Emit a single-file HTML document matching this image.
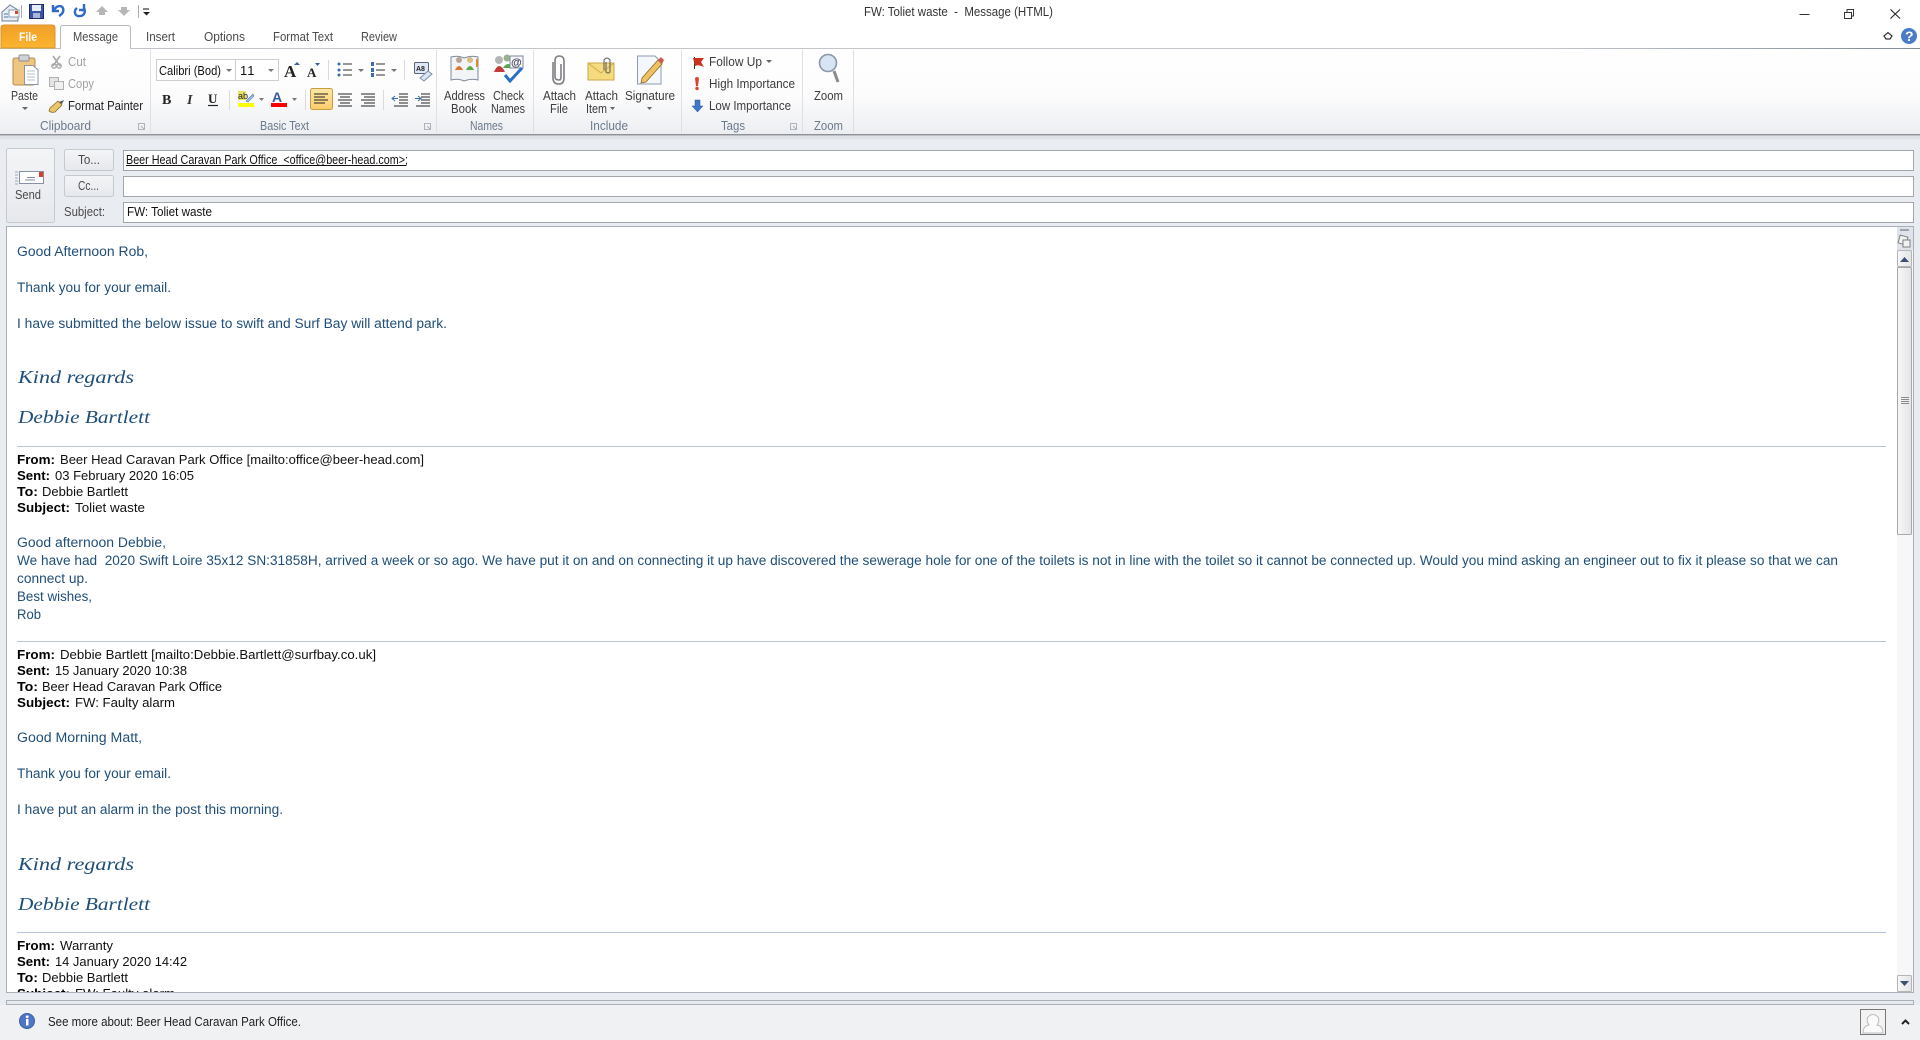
<!DOCTYPE html>
<html><head><meta charset="utf-8"><title>FW: Toliet waste - Message (HTML)</title>
<style>
html,body{margin:0;padding:0;width:1920px;height:1040px;overflow:hidden;background:#e9ecf1}
svg{display:block;position:absolute;left:0;top:0}
text{font-family:"Liberation Sans",sans-serif;font-size:13px;white-space:pre}
.r{fill:#3c3c3c;font-size:12.5px}
.d{fill:#a0a0a0;font-size:12.5px}
.g{fill:#6b7a8c;font-size:12.5px}
.t{fill:#4a4a4a;font-size:12.5px}
.b{fill:#1f4e79;font-size:13.5px}
.k{fill:#111;font-size:13px}
.h{fill:#000;font-size:13px;font-weight:bold}
.s{fill:#1f4e79;font-family:"Liberation Serif",serif;font-style:italic;font-size:18px}
</style></head><body>
<svg width="1920" height="1040" viewBox="0 0 1920 1040" xmlns="http://www.w3.org/2000/svg">
<defs>
<linearGradient id="rb" x1="0" y1="0" x2="0" y2="1"><stop offset="0" stop-color="#fff"/><stop offset=".55" stop-color="#fcfcfd"/><stop offset="1" stop-color="#eceef1"/></linearGradient>
<linearGradient id="fl" x1="0" y1="0" x2="0" y2="1"><stop offset="0" stop-color="#f0a030"/><stop offset=".5" stop-color="#f7a928"/><stop offset="1" stop-color="#fbb530"/></linearGradient>
<linearGradient id="ln" x1="0" y1="0" x2="1" y2="0"><stop offset="0" stop-color="#c0c4c9"/><stop offset=".8" stop-color="#c4c8cd"/><stop offset="1" stop-color="#7f8c97"/></linearGradient>
<linearGradient id="btn" x1="0" y1="0" x2="0" y2="1"><stop offset="0" stop-color="#f4f5f7"/><stop offset="1" stop-color="#e6e8ec"/></linearGradient>
<linearGradient id="sb" x1="0" y1="0" x2="1" y2="0"><stop offset="0" stop-color="#f7f7f8"/><stop offset="1" stop-color="#e3e4e6"/></linearGradient>
<linearGradient id="al" x1="0" y1="0" x2="0" y2="1"><stop offset="0" stop-color="#fde8a5"/><stop offset="1" stop-color="#fbcd6a"/></linearGradient>
</defs>

<!-- title bar + ribbon -->
<rect x="0" y="0" width="1920" height="48" fill="#fff"/>
<rect x="0" y="49" width="1920" height="85" fill="url(#rb)"/>
<rect x="0" y="48" width="1920" height="1" fill="url(#ln)"/>
<rect x="0" y="134" width="1920" height="1.5" fill="#8e9298"/>
<rect x="0" y="136" width="1920" height="3" fill="#dfe2e7"/>

<!-- QAT -->
<path d="M2 12 L10 5 L18 10 V21 H2Z" fill="#e8edf3" stroke="#6e8097"/><rect x="9" y="10" width="10" height="7" fill="#fff" stroke="#8a99ad"/><rect x="15" y="11" width="3" height="3" fill="#d4452b"/><path d="M4 14h4M4 17h4" stroke="#4d7ab5"/>
<path d="M21.5 5v13" stroke="#a8adb3"/>
<rect x="29.5" y="4.5" width="14" height="14" fill="#3d55a5" stroke="#1f2c66"/><rect x="32" y="5" width="9" height="6" fill="#e8eef8"/><rect x="33" y="13" width="7" height="5" fill="#a9b4d8"/>
<path d="M53 5 V11 H59 M54 10 C57 4 65 5 63 12 C62 14 61 15 59 16" fill="none" stroke="#2d6bc5" stroke-width="2.4"/>
<path d="M84 4 V10 H79 M77 8 C73 11 75 17 80 16 C84 16 86 12 84 8" fill="none" stroke="#2d6bc5" stroke-width="2.4"/>
<path d="M96 12 L102 6 L108 12 H105 V15 H99 V12Z" fill="#b4b6b8"/>
<path d="M118 10 H121 V7 H127 V10 H130 L124 16Z" fill="#b4b6b8"/>
<path d="M138.5 5v13" stroke="#a8adb3"/>
<path d="M143 9h6" stroke="#333" stroke-width="1.2"/><path d="M143 12h7l-3.5 3.5z" fill="#222"/>
<text x="864" y="16" class="k" font-size="13" fill="#222" textLength="189" lengthAdjust="spacingAndGlyphs" style="fill:#333">FW: Toliet waste  -  Message (HTML)</text>

<!-- window controls -->
<path d="M1799.5 14.5h10" stroke="#333" stroke-width="1"/>
<rect x="1844.5" y="12.5" width="7" height="6" fill="none" stroke="#333"/><path d="M1847 12.5 V9.5 H1853.5 V16 H1851.5" fill="none" stroke="#333"/>
<path d="M1890.5 9.5 L1900 18.5 M1900 9.5 L1890.5 18.5" stroke="#222" stroke-width="1.1"/>
<path d="M1884 36 L1888 32.500 L1892 36 L1890 39 H1886Z" fill="none" stroke="#333" stroke-width="1.2"/>
<circle cx="1909" cy="36" r="8" fill="#4a7cc9"/><text x="1905" y="41" style="fill:#fff;font-weight:bold;font-size:14px">?</text>

<!-- tabs -->
<path d="M1 48 V28 Q1 25 4 25 H52 Q55 25 55 28 V48Z" fill="url(#fl)" stroke="#d8912a"/>
<text x="19" y="41" style="fill:#fff;font-weight:bold;font-size:12px" textLength="18" lengthAdjust="spacingAndGlyphs">File</text>
<path d="M60.500 49 V28 Q60.500 25.500 63 25.500 H128 Q130.500 25.500 130.500 28 V49" fill="#fff" stroke="#b8bcc2"/><rect x="61" y="47" width="69" height="3" fill="#fff"/>
<text x="73" y="41" class="t" textLength="45" lengthAdjust="spacingAndGlyphs">Message</text>
<text x="146" y="41" class="t" textLength="29" lengthAdjust="spacingAndGlyphs">Insert</text>
<text x="204" y="41" class="t" textLength="41" lengthAdjust="spacingAndGlyphs">Options</text>
<text x="273" y="41" class="t" textLength="60" lengthAdjust="spacingAndGlyphs">Format Text</text>
<text x="361" y="41" class="t" textLength="36" lengthAdjust="spacingAndGlyphs">Review</text>

<!-- group separators -->
<g stroke="#dde0e4"><path d="M150.500 50v83M436.500 50v83M533.500 50v83M681.500 50v83M802.500 50v83M853.500 50v83"/></g>

<!-- Clipboard -->
<rect x="13" y="58" width="22" height="27" rx="2" fill="#eec682" stroke="#b88c4a"/>
<rect x="19" y="55" width="10" height="6" rx="1" fill="#cfd3d8" stroke="#8f8f8f"/>
<path d="M24.500 65.500 H33 L38 70 V84.500 H24.500Z" fill="#fff" stroke="#8a97a8"/><path d="M27 71h8M27 74h8M27 77h8M27 80h8" stroke="#b4bfcc"/>
<text x="11" y="100" class="r" textLength="27" lengthAdjust="spacingAndGlyphs">Paste</text>
<path d="M22 107h6l-3 3z" fill="#666"/>
<path d="M53 56 L60 66 M60 56 L53 66" stroke="#a9a9a9" stroke-width="1.6"/><circle cx="54" cy="66" r="2.200" fill="none" stroke="#a9a9a9" stroke-width="1.400"/><circle cx="59" cy="66" r="2.200" fill="none" stroke="#a9a9a9" stroke-width="1.400"/>
<text x="68" y="66" class="d" textLength="18" lengthAdjust="spacingAndGlyphs">Cut</text>
<rect x="49.500" y="77.500" width="9" height="9" fill="#e4e4e4" stroke="#b0b0b0"/><rect x="54.500" y="81.500" width="9" height="8" fill="#f0f0f0" stroke="#b0b0b0"/>
<text x="68" y="88" class="d" textLength="26" lengthAdjust="spacingAndGlyphs">Copy</text>
<path d="M50 108 L58 101 L62 105 L55 112 Q51 113 49 111Z" fill="#e9c66a" stroke="#8a6a2a" stroke-width=".8"/><path d="M59 102 L64 100 L62 104Z" fill="#555"/>
<text x="68" y="110" class="k" style="font-size:12.5px;fill:#222" textLength="75" lengthAdjust="spacingAndGlyphs">Format Painter</text>
<text x="40" y="130" class="g" textLength="51" lengthAdjust="spacingAndGlyphs">Clipboard</text>
<path d="M138.500 123.500h6v6h-6z M141 126l3 3" fill="none" stroke="#9aa3ad" stroke-width=".8"/>

<!-- Basic Text -->
<rect x="156.500" y="59.500" width="122" height="21" fill="#fff" stroke="#ccced2"/><path d="M235.500 60v20" stroke="#ccced2"/>
<text x="159" y="75" class="k" textLength="62" lengthAdjust="spacingAndGlyphs">Calibri (Bod)</text>
<path d="M226 69h6l-3 3z" fill="#777"/>
<text x="240" y="75" class="k" style="letter-spacing:1px">11</text>
<path d="M268 69h6l-3 3z" fill="#777"/>
<text x="284" y="77" style="font-family:'Liberation Serif',serif;font-weight:bold;font-size:17px;fill:#222">A</text><path d="M294 65l3-3 3 3z" fill="#3a5f9a"/>
<text x="307" y="77" style="font-family:'Liberation Serif',serif;font-weight:bold;font-size:13px;fill:#222">A</text><path d="M315 63h5l-2.500 3z" fill="#3a5f9a"/>
<path d="M328.500 60v20" stroke="#d8dadd"/>
<g fill="#3c6cb0"><circle cx="339" cy="64" r="1.500"/><circle cx="339" cy="70" r="1.500"/><circle cx="339" cy="75" r="1.500"/></g><path d="M343 64h9M343 70h9M343 75h9" stroke="#333"/>
<path d="M358 69h6l-3 3z" fill="#777"/>
<g fill="#3c6cb0"><rect x="371" y="62" width="3" height="4"/><rect x="371" y="68" width="3" height="4"/><rect x="371" y="73" width="3" height="4"/></g><path d="M376 64h9M376 70h9M376 75h9" stroke="#333"/>
<path d="M391 69h6l-3 3z" fill="#777"/>
<path d="M404.500 60v20" stroke="#d8dadd"/>
<rect x="414.500" y="62.500" width="14" height="11" rx="1" fill="#dfe8f5" stroke="#58657a"/><text x="416" y="71" style="font-size:7px;fill:#222;font-weight:bold">A8</text>
<path d="M420 78 L428 71 L432 74 L424 81Z" fill="#dbe6f3" stroke="#7d8fa8"/>
<!-- row 2 -->
<text x="162" y="104" style="font-family:'Liberation Serif',serif;font-weight:bold;font-size:14px;fill:#222">B</text>
<text x="187" y="104" style="font-family:'Liberation Serif',serif;font-style:italic;font-weight:bold;font-size:14px;fill:#333">I</text>
<text x="208" y="103" style="font-family:'Liberation Serif',serif;font-weight:bold;font-size:13px;fill:#222">U</text><path d="M208 105.500h10" stroke="#222" stroke-width="1.200"/>
<path d="M229.500 90v20" stroke="#d8dadd"/>
<rect x="238" y="91" width="8" height="9" fill="#e9e36a"/><text x="238" y="99" style="font-size:9px;fill:#222">ab</text>
<path d="M246 101 L253 94 L254 96 L248 102Z" fill="#9ec0e8" stroke="#5b7da8" stroke-width=".6"/>
<rect x="238" y="103" width="16" height="4" fill="#ffff00"/>
<path d="M259 98h5l-2.500 3z" fill="#777"/>
<text x="272" y="102" style="font-size:14px;font-weight:bold;fill:#3a5a9a">A</text><rect x="271" y="103" width="16" height="4" fill="#f00"/>
<path d="M292 98h5l-2.500 3z" fill="#777"/>
<path d="M305.500 90v20" stroke="#d8dadd"/>
<rect x="310.500" y="88.500" width="22" height="21" rx="2" fill="url(#al)" stroke="#c99b45"/>
<path d="M314 94h14M314 97h11M314 100h14M314 103h11" stroke="#222"/>
<path d="M338 94h14M340 97h10M338 100h14M340 103h10M338 106h14" stroke="#222"/>
<path d="M361 94h14M364 97h11M361 100h14M364 103h11M361 106h14" stroke="#222"/>
<path d="M383.500 90v20" stroke="#d8dadd"/>
<path d="M399 94h9M399 97h9M399 100h9M399 103h9M394 106h14" stroke="#222"/><path d="M398 98.500h-5M395 96l-3 2.500 3 2.500" fill="none" stroke="#3c6cb0"/>
<path d="M421 94h9M421 97h9M421 100h9M421 103h9M416 106h14" stroke="#222"/><path d="M415 98.500h5M418 96l3 2.500-3 2.500" fill="none" stroke="#3c6cb0"/>
<text x="260" y="130" class="g" textLength="49" lengthAdjust="spacingAndGlyphs">Basic Text</text>
<path d="M424.500 123.500h6v6h-6z M427 126l3 3" fill="none" stroke="#9aa3ad" stroke-width=".8"/>

<!-- Names -->
<path d="M451 57 Q458 55 464 58 Q471 55 478 57 V80 Q471 78 464 81 Q458 78 451 80Z" fill="#f2f4f8" stroke="#7d8a9c"/>
<circle cx="459" cy="60" r="3" fill="#b9a58e"/><path d="M455 70 Q459 62 463 70Z" fill="#d97a32"/>
<circle cx="470" cy="60" r="3" fill="#d7c07f"/><path d="M466 70 Q470 62 474 70Z" fill="#5aa84a"/>
<path d="M477 59v8" stroke="#d98b3a" stroke-width="2"/>
<text x="444" y="100" class="r" textLength="41" lengthAdjust="spacingAndGlyphs">Address</text>
<text x="451" y="113" class="r" textLength="26" lengthAdjust="spacingAndGlyphs">Book</text>
<circle cx="499" cy="60" r="4" fill="#b5b5b5"/><path d="M494 72 Q499 60 505 72Z" fill="#c43a3a"/>
<circle cx="507" cy="58" r="3.500" fill="#9ab28c"/><path d="M503 68 Q508 60 513 68Z" fill="#5aa84a"/>
<rect x="510" y="56" width="13" height="12" fill="#f5f7fa" stroke="#7d8a9c"/><text x="511" y="66" style="font-size:11px;font-weight:bold;fill:#445">@</text>
<path d="M505 75 L510 81 L522 68" fill="none" stroke="#2a6fc9" stroke-width="3"/>
<text x="493" y="100" class="r" textLength="31" lengthAdjust="spacingAndGlyphs">Check</text>
<text x="491" y="113" class="r" textLength="34" lengthAdjust="spacingAndGlyphs">Names</text>
<text x="470" y="130" class="g" textLength="33" lengthAdjust="spacingAndGlyphs">Names</text>

<!-- Include -->
<path d="M553 62 V78 Q553 84 559 84 Q564 84 564 78 V61 Q564 56 559 56 Q555 56 555 61 V77 Q555 80 559 80 Q561 80 561 77 V64" fill="none" stroke="#7c7f84" stroke-width="1.600"/>
<text x="543" y="100" class="r" textLength="33" lengthAdjust="spacingAndGlyphs">Attach</text>
<text x="550" y="113" class="r" textLength="18" lengthAdjust="spacingAndGlyphs">File</text>
<rect x="588" y="63" width="26" height="17" fill="#f5da7e" stroke="#c9a94a"/><path d="M588 63 L601 73 L614 63" fill="none" stroke="#d0ae4d"/><path d="M604 70 V60 Q607 56 610 60 V72 Q608 74 606 72 V62" fill="none" stroke="#666" stroke-width="1.100"/>
<text x="585" y="100" class="r" textLength="33" lengthAdjust="spacingAndGlyphs">Attach</text>
<text x="586" y="113" class="r" textLength="21" lengthAdjust="spacingAndGlyphs">Item</text>
<path d="M610 107h5l-2.500 3z" fill="#666"/>
<path d="M637.500 56 H655 L661 62 V84 H637.500Z" fill="#f4f7fb" stroke="#8b9bb0"/>
<path d="M642 78 L658 60 L662 64 L646 82 L641 83Z" fill="#efc262" stroke="#8a6a2a" stroke-width=".8"/><path d="M658 60 L661 57 L664 60 L662 64Z" fill="#cf5a4a"/>
<text x="625" y="100" class="r" textLength="50" lengthAdjust="spacingAndGlyphs">Signature</text>
<path d="M647 107h5l-2.500 3z" fill="#666"/>
<text x="590" y="130" class="g" textLength="38" lengthAdjust="spacingAndGlyphs">Include</text>

<!-- Tags -->
<path d="M694.500 57 V69" stroke="#333"/><path d="M693 58 L704 58 L701 62 L704 67 Q698 64 695 66Z" fill="#c8321f"/>
<text x="709" y="66" class="r" textLength="53" lengthAdjust="spacingAndGlyphs">Follow Up</text>
<path d="M766 60h6l-3 3z" fill="#666"/>
<path d="M695 78 Q697 76 699 78 L698 86 H696Z" fill="#e2412a"/><circle cx="697" cy="88.500" r="1.700" fill="#e2412a"/>
<text x="709" y="88" class="r" textLength="86" lengthAdjust="spacingAndGlyphs">High Importance</text>
<path d="M695 100 H700 V106 H703 L697.500 112 L692 106 H695Z" fill="#3f76c8" stroke="#2a5597" stroke-width=".5"/>
<text x="709" y="110" class="r" textLength="82" lengthAdjust="spacingAndGlyphs">Low Importance</text>
<text x="721" y="130" class="g" textLength="24" lengthAdjust="spacingAndGlyphs">Tags</text>
<path d="M790.500 123.500h6v6h-6z M793 126l3 3" fill="none" stroke="#9aa3ad" stroke-width=".8"/>

<!-- Zoom -->
<circle cx="828" cy="63" r="8.500" fill="#d6e4f3" stroke="#8b97a6" stroke-width="1.600"/>
<path d="M834 71 L838 82" stroke="#8a8a8a" stroke-width="3"/>
<text x="814" y="100" class="r" textLength="29" lengthAdjust="spacingAndGlyphs">Zoom</text>
<text x="814" y="130" class="g" textLength="29" lengthAdjust="spacingAndGlyphs">Zoom</text>

<!-- Form -->
<rect x="6.500" y="148.500" width="48" height="74" rx="2" fill="url(#btn)" stroke="#c6cad0"/>
<rect x="19.500" y="171.500" width="24" height="12" fill="#fff" stroke="#8592a6"/><rect x="39" y="172" width="4" height="5" fill="#d6402a"/>
<path d="M25 180h10M27 177.500h8" stroke="#7f8ea6"/><path d="M15 172h3M15 175h3M15 178h3M15 181h3M15 184h3" stroke="#9aa7b8"/>
<text x="15" y="199" class="t" style="font-size:13px" textLength="26" lengthAdjust="spacingAndGlyphs">Send</text>
<rect x="64.500" y="149.500" width="49" height="21" rx="2" fill="url(#btn)" stroke="#c6cad0"/>
<text x="78" y="164" class="t" textLength="22" lengthAdjust="spacingAndGlyphs">To...</text>
<rect x="64.500" y="175.500" width="49" height="21" rx="2" fill="url(#btn)" stroke="#c6cad0"/>
<text x="78" y="190" class="t" textLength="21" lengthAdjust="spacingAndGlyphs">Cc...</text>
<text x="64" y="216" class="t" textLength="41" lengthAdjust="spacingAndGlyphs">Subject:</text>
<rect x="123.500" y="150.500" width="1790" height="20" fill="#fff" stroke="#a2a5aa"/>
<rect x="123.500" y="176.500" width="1790" height="20" fill="#fff" stroke="#a2a5aa"/>
<rect x="123.500" y="202.500" width="1790" height="20" fill="#fff" stroke="#a2a5aa"/>
<text x="126" y="164" class="k" textLength="282" lengthAdjust="spacingAndGlyphs">Beer Head Caravan Park Office  &lt;office@beer-head.com&gt;;</text>
<path d="M126 165.500h280" stroke="#111"/>
<text x="127" y="216" class="k" textLength="85" lengthAdjust="spacingAndGlyphs">FW: Toliet waste</text>

<!-- Body -->
<rect x="6.500" y="226.500" width="1907" height="766" fill="#fff" stroke="#a9afbb"/>
<rect x="1897" y="227" width="16" height="23" fill="#dfe3ea"/>
<rect x="1900" y="229" width="9" height="2" fill="#9ea3ab"/>
<rect x="1899" y="236" width="8" height="8" fill="#f2f2f2" stroke="#7f7f7f" transform="rotate(15 1903 240)"/><rect x="1903" y="240" width="7" height="7" fill="#f2f2f2" stroke="#7f7f7f"/>
<rect x="1897" y="250" width="16" height="742" fill="#f7f7f8"/>
<rect x="1897.500" y="250.500" width="14" height="16" rx="1" fill="url(#sb)" stroke="#b5b5b5"/>
<path d="M1900 262h9l-4.500-5z" fill="#3d4f73"/>
<rect x="1897.500" y="267.500" width="14" height="267" rx="1" fill="url(#sb)" stroke="#a8a8a8"/>
<path d="M1901 397.500h8M1901 399.500h8M1901 401.500h8M1901 403.500h8" stroke="#8b8b8b"/>
<rect x="1897.500" y="975.500" width="14" height="16" rx="1" fill="url(#sb)" stroke="#b5b5b5"/>
<path d="M1900 981h9l-4.500 5z" fill="#3d4f73"/>

<text x="17" y="256" class="b" textLength="131" lengthAdjust="spacingAndGlyphs">Good Afternoon Rob,</text>
<text x="17" y="292" class="b" textLength="154" lengthAdjust="spacingAndGlyphs">Thank you for your email.</text>
<text x="17" y="328" class="b" textLength="430" lengthAdjust="spacingAndGlyphs">I have submitted the below issue to swift and Surf Bay will attend park.</text>
<text x="18" y="383" class="s" textLength="116" lengthAdjust="spacingAndGlyphs">Kind regards</text>
<text x="18" y="423" class="s" textLength="132" lengthAdjust="spacingAndGlyphs">Debbie Bartlett</text>
<rect x="17" y="446" width="1869" height="1" fill="#b5c4df"/>

<text x="17" y="464" class="h" textLength="38" lengthAdjust="spacingAndGlyphs">From:</text>
<text x="60" y="464" class="k" textLength="364" lengthAdjust="spacingAndGlyphs">Beer Head Caravan Park Office [mailto:office@beer-head.com]</text>
<text x="17" y="480" class="h" textLength="33" lengthAdjust="spacingAndGlyphs">Sent:</text>
<text x="55" y="480" class="k" textLength="139" lengthAdjust="spacingAndGlyphs">03 February 2020 16:05</text>
<text x="17" y="496" class="h" textLength="21" lengthAdjust="spacingAndGlyphs">To:</text>
<text x="42" y="496" class="k" textLength="86" lengthAdjust="spacingAndGlyphs">Debbie Bartlett</text>
<text x="17" y="512" class="h" textLength="53" lengthAdjust="spacingAndGlyphs">Subject:</text>
<text x="75" y="512" class="k" textLength="70" lengthAdjust="spacingAndGlyphs">Toliet waste</text>

<text x="17" y="547" class="b" textLength="149" lengthAdjust="spacingAndGlyphs">Good afternoon Debbie,</text>
<text x="17" y="565" class="b" textLength="1821" lengthAdjust="spacingAndGlyphs">We have had  2020 Swift Loire 35x12 SN:31858H, arrived a week or so ago. We have put it on and on connecting it up have discovered the sewerage hole for one of the toilets is not in line with the toilet so it cannot be connected up. Would you mind asking an engineer out to fix it please so that we can</text>
<text x="17" y="583" class="b" textLength="71" lengthAdjust="spacingAndGlyphs">connect up.</text>
<text x="17" y="601" class="b" textLength="75" lengthAdjust="spacingAndGlyphs">Best wishes,</text>
<text x="17" y="619" class="b" textLength="24" lengthAdjust="spacingAndGlyphs">Rob</text>
<rect x="17" y="641" width="1869" height="1" fill="#b5c4df"/>

<text x="17" y="659" class="h" textLength="38" lengthAdjust="spacingAndGlyphs">From:</text>
<text x="60" y="659" class="k" textLength="316" lengthAdjust="spacingAndGlyphs">Debbie Bartlett [mailto:Debbie.Bartlett@surfbay.co.uk]</text>
<text x="17" y="675" class="h" textLength="33" lengthAdjust="spacingAndGlyphs">Sent:</text>
<text x="55" y="675" class="k" textLength="132" lengthAdjust="spacingAndGlyphs">15 January 2020 10:38</text>
<text x="17" y="691" class="h" textLength="21" lengthAdjust="spacingAndGlyphs">To:</text>
<text x="42" y="691" class="k" textLength="180" lengthAdjust="spacingAndGlyphs">Beer Head Caravan Park Office</text>
<text x="17" y="707" class="h" textLength="53" lengthAdjust="spacingAndGlyphs">Subject:</text>
<text x="75" y="707" class="k" textLength="100" lengthAdjust="spacingAndGlyphs">FW: Faulty alarm</text>

<text x="17" y="742" class="b" textLength="125" lengthAdjust="spacingAndGlyphs">Good Morning Matt,</text>
<text x="17" y="778" class="b" textLength="154" lengthAdjust="spacingAndGlyphs">Thank you for your email.</text>
<text x="17" y="814" class="b" textLength="266" lengthAdjust="spacingAndGlyphs">I have put an alarm in the post this morning.</text>
<text x="18" y="870" class="s" textLength="116" lengthAdjust="spacingAndGlyphs">Kind regards</text>
<text x="18" y="910" class="s" textLength="132" lengthAdjust="spacingAndGlyphs">Debbie Bartlett</text>
<rect x="17" y="932" width="1869" height="1" fill="#b5c4df"/>

<text x="17" y="950" class="h" textLength="38" lengthAdjust="spacingAndGlyphs">From:</text>
<text x="60" y="950" class="k" textLength="53" lengthAdjust="spacingAndGlyphs">Warranty</text>
<text x="17" y="966" class="h" textLength="33" lengthAdjust="spacingAndGlyphs">Sent:</text>
<text x="55" y="966" class="k" textLength="132" lengthAdjust="spacingAndGlyphs">14 January 2020 14:42</text>
<text x="17" y="982" class="h" textLength="21" lengthAdjust="spacingAndGlyphs">To:</text>
<text x="42" y="982" class="k" textLength="86" lengthAdjust="spacingAndGlyphs">Debbie Bartlett</text>
<svg x="7" y="986" width="1889" height="6" viewBox="7 986 1889 6">
<text x="17" y="998" class="h" textLength="53" lengthAdjust="spacingAndGlyphs">Subject:</text>
<text x="75" y="998" class="k" textLength="100" lengthAdjust="spacingAndGlyphs">FW: Faulty alarm</text>
</svg>

<!-- Bottom -->
<rect x="0" y="1005" width="1920" height="35" fill="#eff1f3"/>
<rect x="6.500" y="1000.500" width="1907" height="4" fill="#e6e9ee" stroke="#a9afbb"/>
<circle cx="27" cy="1021" r="7.500" fill="#4d76c4" stroke="#3b5fa8"/>
<rect x="26" y="1019" width="2.500" height="6.500" fill="#fff"/><circle cx="27.200" cy="1016.800" r="1.400" fill="#fff"/>
<text x="48" y="1026" class="k" style="font-size:12.500px;fill:#222" textLength="253" lengthAdjust="spacingAndGlyphs">See more about: Beer Head Caravan Park Office.</text>
<rect x="1860.500" y="1009.500" width="25" height="25" fill="#f3f3f3" stroke="#777"/>
<path d="M1863 1033 Q1863 1026 1869 1025 Q1866 1021 1868 1017 Q1873 1012 1878 1017 Q1880 1021 1877 1025 Q1883 1026 1883 1033Z" fill="#fafafa" stroke="#bcbcbc"/>
<path d="M1902 1024 L1905.500 1020.500 L1909 1024" fill="none" stroke="#222" stroke-width="2"/>
</svg>
</body></html>
